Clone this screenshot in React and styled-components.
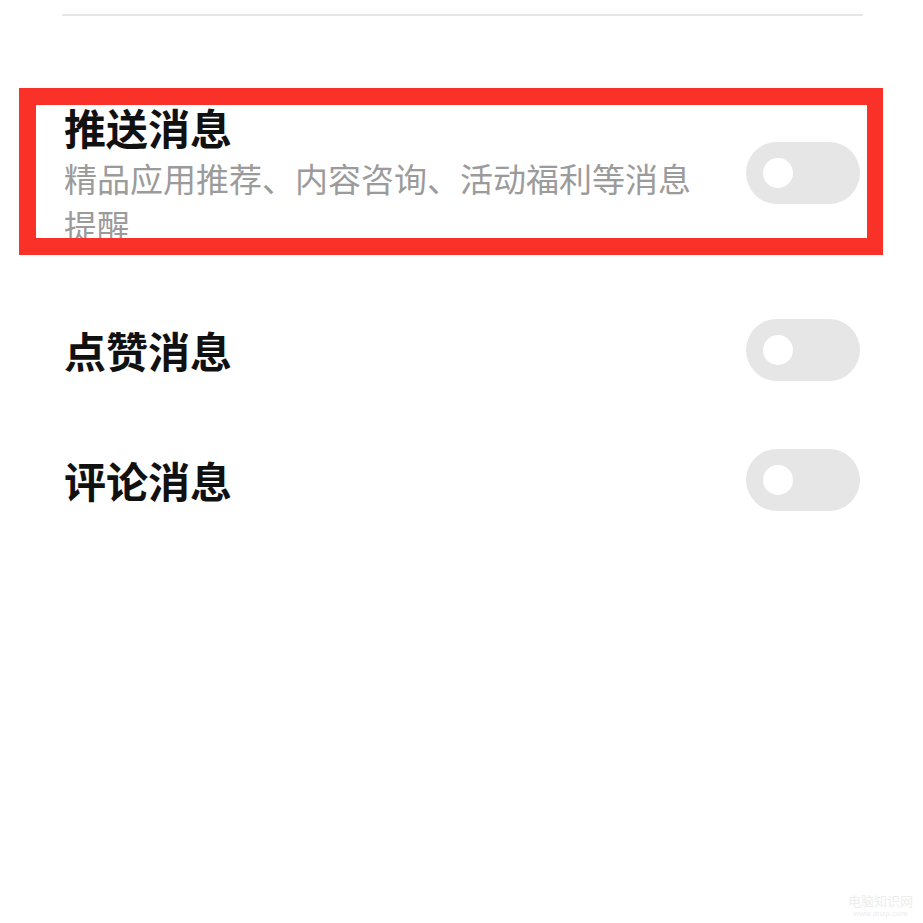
import React from "react";
import styled, { createGlobalStyle } from "styled-components";

const Global = createGlobalStyle`
  html, body { margin: 0; padding: 0; background: #ffffff; }
  body { font-family: "Noto Sans CJK SC", "Noto Sans", sans-serif; }
`;

const Page = styled.div`
  position: relative;
  width: 923px;
  height: 923px;
  background: #ffffff;
  overflow: hidden;
`;

const Section = styled.div`
  padding: 14px 61px 0 62px;
`;

const Divider = styled.div`
  height: 2px;
  background: #e6e6e6;
  margin-right: -1px;
`;

const List = styled.div`
  display: flex;
  flex-direction: column;
  padding-left: 2px;
  padding-right: 2px;
  margin-top: 87px;
`;

const Row = styled.div`
  display: flex;
  align-items: center;
  gap: 41px;
  min-height: ${(p) => p.$h || 0}px;
  margin-top: ${(p) => p.$mt || 0}px;
`;

const TextCol = styled.div`
  flex: 1;
  display: flex;
  flex-direction: column;
  min-width: 0;
`;

const Title = styled.div`
  font-size: 42px;
  line-height: 48px;
  font-weight: 700;
  color: #111111;
`;

const Sub = styled.div`
  margin-top: 4px;
  font-size: 33px;
  line-height: 47px;
  color: #9b9b9b;
`;

const Toggle = styled.div`
  flex: none;
  width: 114px;
  height: 62px;
  border-radius: 31px;
  background: #e6e6e6;
  display: flex;
  align-items: center;
  padding-left: 17px;
  box-sizing: border-box;
  margin-top: ${(p) => p.$mt || 0}px;
`;

const Knob = styled.div`
  width: 30px;
  height: 30px;
  border-radius: 50%;
  background: #ffffff;
`;

const Highlight = styled.div`
  position: absolute;
  left: 19px;
  top: 88px;
  width: 864px;
  height: 167px;
  box-sizing: border-box;
  border: solid #fa3128;
  border-width: 17px 16px 17px 17px;
  pointer-events: none;
`;

const Watermark = styled.div`
  position: absolute;
  right: 10px;
  bottom: 4px;
  display: flex;
  flex-direction: column;
  align-items: center;
  gap: 1px;
  color: #ededed;
  font-family: "Noto Sans CJK SC", sans-serif;
`;

const WmBig = styled.span`
  font-size: 13px;
  line-height: 15px;
`;

const WmSmall = styled.span`
  font-size: 8px;
  line-height: 10px;
  font-family: "Liberation Sans", sans-serif;
`;

const Switch = ({ mt }) => (
  <Toggle $mt={mt}>
    <Knob />
  </Toggle>
);

export default function App() {
  return (
    <Page>
      <Global />
      <Section>
        <Divider />
        <List>
          <Row>
            <TextCol>
              <Title>推送消息</Title>
              <Sub>精品应用推荐、内容咨询、活动福利等消息提醒</Sub>
            </TextCol>
            <Switch mt={-6} />
          </Row>
          <Row $h={130} $mt={36}>
            <TextCol>
              <Title>点赞消息</Title>
            </TextCol>
            <Switch />
          </Row>
          <Row $h={130}>
            <TextCol>
              <Title>评论消息</Title>
            </TextCol>
            <Switch />
          </Row>
        </List>
      </Section>
      <Highlight />
      <Watermark>
        <WmBig>电脑知识网</WmBig>
        <WmSmall>www.dnzp.com</WmSmall>
      </Watermark>
    </Page>
  );
}
